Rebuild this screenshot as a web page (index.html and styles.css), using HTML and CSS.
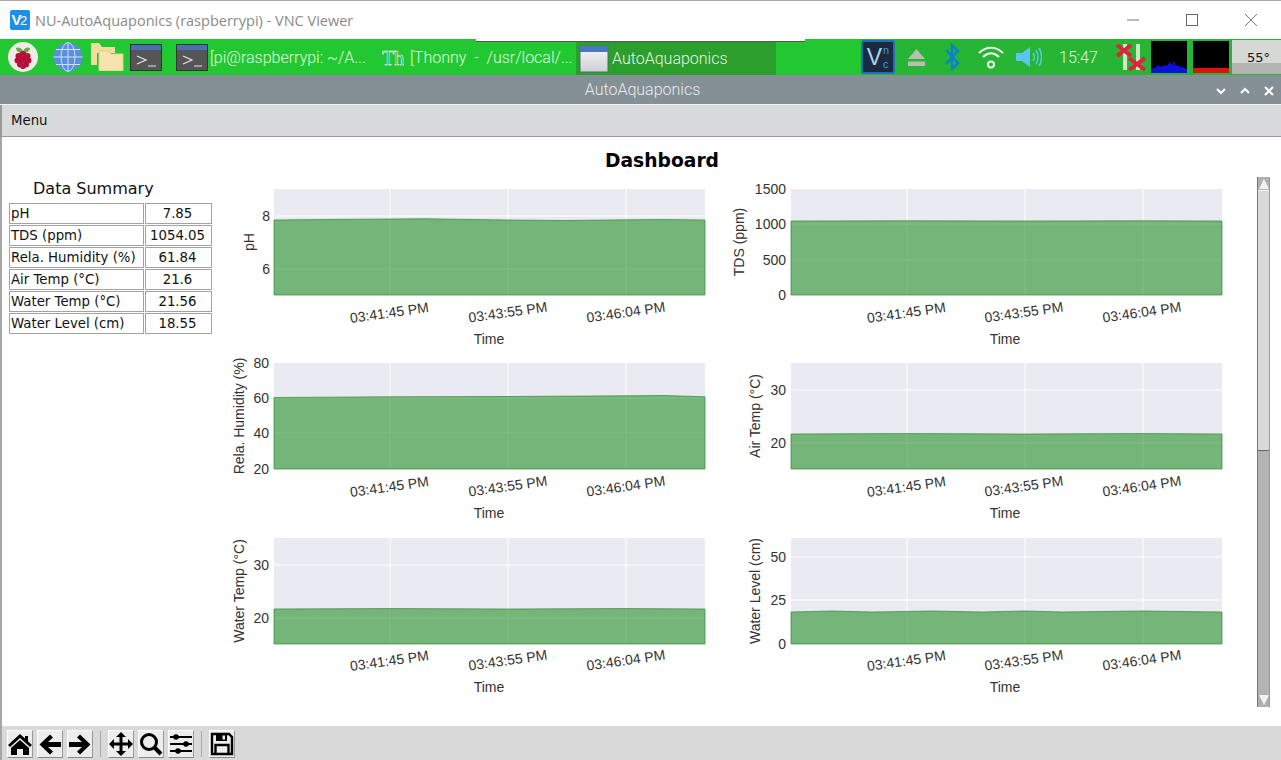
FILE: index.html
```html
<!DOCTYPE html>
<html lang="en">
<head>
<meta charset="utf-8">
<title>NU-AutoAquaponics (raspberrypi) - VNC Viewer</title>
<link rel="stylesheet" href="styles.css">
</head>
<body>
<div class="win">
  <header class="vnc-title">
    <svg class="vnc-logo" width="20" height="20" viewBox="0 0 20 20"><rect width="20" height="20" rx="2" fill="#1e8fe6"/><text x="1.5" y="15" class="logo-v">V</text><text x="10" y="15" class="logo-2">2</text></svg>
    <span class="vnc-title-text">NU-AutoAquaponics (raspberrypi) - VNC Viewer</span>
    <div class="win-ctrls">
      <svg width="14" height="14" viewBox="0 0 14 14"><path d="M1 7h12" stroke="#777" fill="none"/></svg>
      <svg width="14" height="14" viewBox="0 0 14 14"><rect x="1.5" y="1.5" width="11" height="11" stroke="#666" fill="none"/></svg>
      <svg width="14" height="14" viewBox="0 0 14 14"><path d="M1 1l12 12M13 1L1 13" stroke="#777" fill="none"/></svg>
    </div>
  </header>
  <div class="vnc-notch"></div>

  <nav class="taskbar">
    <svg class="tb-rpi" width="30" height="30" viewBox="0 0 30 30"><circle cx="15" cy="15" r="15" fill="#f1ebe6"/><path d="M15 9C12 4 9 6 8 6c0 3 3 5 7 5 4 0 7-2 7-5-1 0-4-2-7 3z" fill="#6aa84f"/><g fill="#b5123a"><circle cx="15" cy="12.500" r="3.600"/><circle cx="10.500" cy="14" r="3"/><circle cx="19.500" cy="14" r="3"/><circle cx="9.500" cy="18.500" r="3"/><circle cx="20.500" cy="18.500" r="3"/><circle cx="15" cy="18" r="3.600"/><circle cx="12" cy="22.500" r="3"/><circle cx="18" cy="22.500" r="3"/><circle cx="15" cy="24.500" r="2.600"/></g></svg>
    <svg class="tb-globe" width="30" height="30" viewBox="0 0 30 30"><circle cx="15" cy="15" r="14.500" fill="#5b8fdc"/><g stroke="#cfe2f8" fill="none"><ellipse cx="15" cy="15" rx="7" ry="14.500"/><path d="M15 .5v29M.5 15h29M3 7.500h24M3 22.500h24"/></g></svg>
    <svg class="tb-folder" width="33" height="28" viewBox="0 0 33 28"><path d="M0 0h8l3 4h13v6H0z" fill="#f2dc9b"/><path d="M0 2h6v20H0z" fill="#f2dc9b"/><path d="M8 8h9l3 3h12v17H8z" fill="#f6e3ad" stroke="#e3cb8a"/></svg>
    <svg class="term tb-term1" width="32" height="27" viewBox="0 0 32 27"><rect x=".5" y=".5" width="31" height="26" fill="#555" stroke="#333"/><rect x="1" y="1" width="30" height="5" fill="#4a6fb5"/><path d="M7 12l9 4-9 4M18 22h8" stroke="#e8e8e8" stroke-width="1.200" fill="none"/></svg>
    <div class="task task-term">
      <svg class="term" width="32" height="27" viewBox="0 0 32 27"><rect x=".5" y=".5" width="31" height="26" fill="#555" stroke="#333"/><rect x="1" y="1" width="30" height="5" fill="#4a6fb5"/><path d="M7 12l9 4-9 4M18 22h8" stroke="#e8e8e8" stroke-width="1.200" fill="none"/></svg>
      <span>[pi@raspberrypi: ~/A...</span>
    </div>
    <div class="task task-thonny">
      <svg width="22" height="24" viewBox="0 0 22 24"><text x="0" y="20" class="thonny-glyph">Th</text></svg>
      <span>[Thonny  -  /usr/local/...</span>
    </div>
    <div class="task task-active">
      <svg width="30" height="28" viewBox="0 0 30 28"><defs><linearGradient id="wg" x1="0" y1="0" x2="0" y2="1"><stop offset="0" stop-color="#f6f6fa"/><stop offset="1" stop-color="#cfcfd6"/></linearGradient></defs><rect x="1" y="1" width="28" height="26" fill="url(#wg)" stroke="#3f7a55"/><rect x="1" y="1" width="28" height="6" fill="#4a78c4"/></svg>
      <span>AutoAquaponics</span>
    </div>
    <div class="tray">
      <div class="tray-vnc"><span class="tv-v">V</span><span class="tv-stack"><span>n</span><span>c</span></span></div>
      <svg class="tr-eject" width="17" height="18" viewBox="0 0 17 18"><path d="M8.500 1L17 11H0z M0 13.500h17V18H0z" fill="#b9bdb4"/></svg>
      <svg class="tr-bt" width="16" height="28" viewBox="0 0 16 28"><path d="M2 7l12 13-6 6V2l6 6L2 21" stroke="#0c7ed6" stroke-width="2.400" fill="none"/></svg>
      <svg class="tr-wifi" width="26" height="24" viewBox="0 0 26 24"><g stroke="#eef5e8" stroke-width="2.200" fill="none"><path d="M1 8c7-7 17-7 24 0"/><path d="M5 12c5-5 11-5 16 0"/></g><circle cx="13" cy="19.500" r="3" fill="none" stroke="#eef5e8" stroke-width="2"/></svg>
      <svg class="tr-vol" width="26" height="22" viewBox="0 0 26 22"><path d="M0 7h6l8-6v20l-8-6H0z" fill="#5cc4ef"/><g stroke="#5cc4ef" stroke-width="1.500" fill="none"><path d="M17 7c1.500 2.500 1.500 5.500 0 8"/><path d="M20 4c2.500 4 2.500 10 0 14"/><path d="M23 2c3.500 5 3.500 13 0 18"/></g></svg>
      <span class="tr-clock">15:47</span>
      <svg class="tr-mixer" width="31" height="28" viewBox="0 0 31 28"><g fill="#cfe8c4"><rect x="8" y="1" width="4" height="26"/><rect x="21" y="1" width="4" height="26"/></g><path d="M2 2l14 11M16 2L2 13M14 15l16 12M30 15L14 27" stroke="#e4203f" stroke-width="3.800" fill="none"/></svg>
      <svg class="tr-cpu" width="36" height="32" viewBox="0 0 36 32"><rect width="36" height="32"/><path d="M0 32v-4l4-1 3-3 3 2 4-2 2 1 3-4 2 4 2-6 1 5 4 1 3 1 5 2v4z" fill="#0b12e0"/></svg>
      <svg class="tr-mem" width="36" height="32" viewBox="0 0 36 32"><rect width="36" height="32"/><rect y="27" width="36" height="5" fill="#e01010"/></svg>
      <div class="tr-temp"><span>55°</span></div>
    </div>
  </nav>

  <div class="app-title">
    <span>AutoAquaponics</span>
    <div class="app-ctrls">
      <svg width="10" height="8" viewBox="0 0 10 8"><path d="M1 2l4 4 4-4" stroke="#fff" stroke-width="2" fill="none"/></svg>
      <svg width="10" height="8" viewBox="0 0 10 8"><path d="M1 6l4-4 4 4" stroke="#fff" stroke-width="2" fill="none"/></svg>
      <svg width="10" height="10" viewBox="0 0 10 10"><path d="M1 1l8 8M9 1L1 9" stroke="#fff" stroke-width="2" fill="none"/></svg>
    </div>
  </div>

  <div class="menubar"><span>Menu</span></div>

  <main class="content">
    <div class="content-left">
      <h1 class="dash-title">Dashboard</h1>
      <div class="dash-body">
        <aside class="summary">
          <h2>Data Summary</h2>
          <table class="summary-table">
            <tr><td>pH</td><td>7.85</td></tr>
            <tr><td>TDS (ppm)</td><td>1054.05</td></tr>
            <tr><td>Rela. Humidity (%)</td><td>61.84</td></tr>
            <tr><td>Air Temp (°C)</td><td>21.6</td></tr>
            <tr><td>Water Temp (°C)</td><td>21.56</td></tr>
            <tr><td>Water Level (cm)</td><td>18.55</td></tr>
          </table>
        </aside>
        <section class="charts">
          <!-- pH -->
          <svg class="chart" width="517" height="174" viewBox="0 0 517 174">
            <rect x="49" y="9" width="431" height="106" class="bg"/>
            <path d="M165 9v106M283 9v106M401 9v106M49 36h431M49 89h431" class="grid"/>
            <path d="M49 40 L100 39.500 L165 39 L200 38.800 L283 40 L340 40.500 L401 39.800 L440 39.500 L480 40 V115 H49z" class="area"/>
            <text x="45" y="41" class="ytick">8</text><text x="45" y="94" class="ytick">6</text>
            <text transform="translate(165 137.500) rotate(-8)" class="xtick">03:41:45 PM</text>
            <text transform="translate(283.500 137) rotate(-8)" class="xtick">03:43:55 PM</text>
            <text transform="translate(401.500 137) rotate(-8)" class="xtick">03:46:04 PM</text>
            <text transform="translate(29 62) rotate(-90)" class="ylabel">pH</text>
            <text x="264" y="164" class="xlabel">Time</text>
          </svg>
          <!-- TDS -->
          <svg class="chart" width="517" height="174" viewBox="0 0 517 174">
            <rect x="49" y="9" width="431" height="106" class="bg"/>
            <path d="M165 9v106M283 9v106M401 9v106M49 44h431M49 80h431" class="grid"/>
            <path d="M49 41 L165 40.800 L283 41 L401 40.800 L480 41 V115 H49z" class="area"/>
            <text x="44" y="14" class="ytick">1500</text><text x="44" y="49" class="ytick">1000</text><text x="44" y="85" class="ytick">500</text><text x="44" y="120" class="ytick">0</text>
            <text transform="translate(2 62) rotate(-90)" class="ylabel">TDS (ppm)</text>
            <text transform="translate(165 137.500) rotate(-8)" class="xtick">03:41:45 PM</text>
            <text transform="translate(282.500 137) rotate(-8)" class="xtick">03:43:55 PM</text>
            <text transform="translate(400.500 137) rotate(-8)" class="xtick">03:46:04 PM</text>
            <text x="263" y="164" class="xlabel">Time</text>
          </svg>
          <!-- Humidity -->
          <svg class="chart" width="517" height="174" viewBox="0 0 517 174">
            <rect x="49" y="9" width="431" height="106" class="bg"/>
            <path d="M165 9v106M283 9v106M401 9v106M49 44h431M49 79h431" class="grid"/>
            <path d="M49 43.500 L165 42.800 L283 42.500 L401 41.800 L440 41.500 L480 42.800 V115 H49z" class="area"/>
            <text x="44" y="14" class="ytick">80</text><text x="44" y="49" class="ytick">60</text><text x="44" y="84" class="ytick">40</text><text x="44" y="120" class="ytick">20</text>
            <text transform="translate(19 62) rotate(-90)" class="ylabel">Rela. Humidity (%)</text>
            <text transform="translate(165 137.500) rotate(-8)" class="xtick">03:41:45 PM</text>
            <text transform="translate(283.500 137) rotate(-8)" class="xtick">03:43:55 PM</text>
            <text transform="translate(401.500 137) rotate(-8)" class="xtick">03:46:04 PM</text>
            <text x="264" y="164" class="xlabel">Time</text>
          </svg>
          <!-- Air temp -->
          <svg class="chart" width="517" height="174" viewBox="0 0 517 174">
            <rect x="49" y="9" width="431" height="106" class="bg"/>
            <path d="M165 9v106M283 9v106M401 9v106M49 36h431M49 89h431" class="grid"/>
            <path d="M49 80 L165 79.600 L283 80 L401 79.600 L480 80 V115 H49z" class="area"/>
            <text x="44" y="41" class="ytick">30</text><text x="44" y="94" class="ytick">20</text>
            <text transform="translate(18 62) rotate(-90)" class="ylabel">Air Temp (°C)</text>
            <text transform="translate(165 137.500) rotate(-8)" class="xtick">03:41:45 PM</text>
            <text transform="translate(282.500 137) rotate(-8)" class="xtick">03:43:55 PM</text>
            <text transform="translate(400.500 137) rotate(-8)" class="xtick">03:46:04 PM</text>
            <text x="263" y="164" class="xlabel">Time</text>
          </svg>
          <!-- Water temp -->
          <svg class="chart" width="517" height="174" viewBox="0 0 517 174">
            <rect x="49" y="10" width="431" height="106" class="bg"/>
            <path d="M165 10v106M283 10v106M401 10v106M49 37h431M49 90h431" class="grid"/>
            <path d="M49 81 L165 80.600 L283 81 L401 80.600 L480 81 V116 H49z" class="area"/>
            <text x="44" y="42" class="ytick">30</text><text x="44" y="95" class="ytick">20</text>
            <text transform="translate(19 63) rotate(-90)" class="ylabel">Water Temp (°C)</text>
            <text transform="translate(165 137.500) rotate(-8)" class="xtick">03:41:45 PM</text>
            <text transform="translate(283.500 137) rotate(-8)" class="xtick">03:43:55 PM</text>
            <text transform="translate(401.500 137) rotate(-8)" class="xtick">03:46:04 PM</text>
            <text x="264" y="164" class="xlabel">Time</text>
          </svg>
          <!-- Water level -->
          <svg class="chart" width="517" height="174" viewBox="0 0 517 174">
            <rect x="49" y="10" width="431" height="106" class="bg"/>
            <path d="M165 10v106M283 10v106M401 10v106M49 29h431M49 72h431" class="grid"/>
            <path d="M49 84 L90 83 L130 84 L190 83 L240 84 L283 83 L320 84 L401 83 L440 83.500 L480 84 V116 H49z" class="area"/>
            <text x="44" y="34" class="ytick">50</text><text x="44" y="77" class="ytick">25</text><text x="44" y="121" class="ytick">0</text>
            <text transform="translate(18 63) rotate(-90)" class="ylabel">Water Level (cm)</text>
            <text transform="translate(165 137.500) rotate(-8)" class="xtick">03:41:45 PM</text>
            <text transform="translate(282.500 137) rotate(-8)" class="xtick">03:43:55 PM</text>
            <text transform="translate(400.500 137) rotate(-8)" class="xtick">03:46:04 PM</text>
            <text x="263" y="164" class="xlabel">Time</text>
          </svg>
        </section>
      </div>
    </div>
    <div class="scrollbar">
      <div class="sb-btn"><svg width="10" height="11" viewBox="0 0 10 11"><path d="M5 1l5 10H0z" fill="#f2f2f2"/></svg></div>
      <div class="sb-thumb"></div>
      <div class="sb-trough"></div>
      <div class="sb-btn"><svg width="10" height="11" viewBox="0 0 10 11"><path d="M5 10L10 0H0z" fill="#f2f2f2"/></svg></div>
    </div>
  </main>

  <footer class="toolbar">
    <button class="tool" aria-label="Home"><svg width="24" height="24" viewBox="0 0 24 24"><path d="M12 2L0 13l2 2L12 6l10 9 2-2-4-3.700V4h-3v2.600z"/><path d="M12 8L3 16v7h6v-6h6v6h6v-7z"/></svg></button>
    <button class="tool" aria-label="Back"><svg width="24" height="24" viewBox="0 0 24 24"><path d="M12 2.500l3 3L10 10h13v5H10l5 4.500-3 3L1.500 12.500z"/></svg></button>
    <button class="tool" aria-label="Forward"><svg width="24" height="24" viewBox="0 0 24 24"><path d="M12 2.500l-3 3 5 4.500H1v5h13l-5 4.500 3 3 10.500-10z"/></svg></button>
    <span class="tool-sep"></span>
    <button class="tool" aria-label="Pan"><svg width="24" height="24" viewBox="0 0 24 24"><path d="M12 0l5 5h-3.500v5.500H19V7l5 5-5 5v-3.500h-5.500V19H17l-5 5-5-5h3.500v-5.500H5V17l-5-5 5-5v3.500h5.500V5H7z"/></svg></button>
    <button class="tool" aria-label="Zoom"><svg width="24" height="24" viewBox="0 0 24 24"><circle cx="10" cy="10" r="7.500" fill="none" stroke="#000" stroke-width="3"/><path d="M15 15l7 7" stroke="#000" stroke-width="4"/></svg></button>
    <button class="tool" aria-label="Configure"><svg width="24" height="24" viewBox="0 0 24 24"><path d="M1 5h22M1 12h22M1 19h22" stroke="#000" stroke-width="2"/><circle cx="7" cy="5" r="2.800"/><circle cx="17" cy="12" r="2.800"/><circle cx="9" cy="19" r="2.800"/></svg></button>
    <span class="tool-sep"></span>
    <button class="tool" aria-label="Save"><svg width="24" height="24" viewBox="0 0 24 24"><path d="M2 2h17l3 3v17H2z" fill="none" stroke="#000" stroke-width="2.400"/><path d="M6 2h11v7H6z"/><rect x="12.500" y="3.500" width="2.500" height="4" fill="#eee"/><path d="M5.500 21v-8h13v8" fill="none" stroke="#000" stroke-width="2.400"/></svg></button>
  </footer>
</div>
</body>
</html>
```
FILE: styles.css
```css
* { box-sizing: border-box; }
html, body { margin: 0; padding: 0; }
body { width: 1281px; height: 760px; overflow: hidden; background: #fff; }
.win { position: relative; display: flex; flex-direction: column; width: 1281px; height: 760px; }

.vnc-title { display: flex; align-items: center; height: 39px; padding: 0 23px 0 10px; background: #fff; border-top: 1px solid #aaa; flex: none; }
.vnc-logo { flex: none; }
.logo-v { font: 700 15px "Liberation Sans", sans-serif; fill: #fff; }
.logo-2 { font: 400 13px "Liberation Sans", sans-serif; fill: #fff; }
.vnc-title-text { margin-left: 5px; font: 14.500px "Open Sans", sans-serif; color: #8a8a8a; }
.win-ctrls { display: flex; gap: 45px; margin-left: auto; }
.vnc-notch { position: absolute; left: 476px; top: 39px; width: 329px; height: 3px; background: #fff; border-bottom: 1px solid #555; z-index: 2; }

.taskbar { display: flex; align-items: center; height: 36px; flex: none; background: #22c832; color: #e4f7df; font: 300 16px Roboto, sans-serif; white-space: pre; }
.tb-rpi { margin-left: 8px; }
.tb-globe { margin-left: 15px; }
.tb-folder { margin-left: 8px; }
.tb-term1 { margin-left: 6px; }
.task { display: flex; align-items: center; height: 36px; }
.task-term { margin-left: 14px; width: 206px; gap: 2px; }
.task-thonny { width: 194px; gap: 6px; }
.task-active { width: 200px; background: #2b9e2e; padding-left: 3px; gap: 3px; margin-top: 3px; height: 33px; }
.thonny-glyph { font: 400 20px "Liberation Serif", serif; fill: #1f9c2a; stroke: #f2f2f2; stroke-width: .6px; }

.tray { display: flex; align-items: center; margin-left: 85px; flex: 1; height: 36px; background: #26b534; }
.tray-vnc { display: flex; align-items: center; justify-content: center; gap: 1px; width: 34px; height: 34px; background: #1c2a3e; border: 2px solid #1e6fc0; border-radius: 3px; font: 300 23px "Liberation Sans", sans-serif; }
.tv-v { color: #a8d4f5; }
.tv-stack { display: flex; flex-direction: column; color: #3b9be0; font-size: 11px; line-height: 14px; }
.tr-eject { margin-left: 13px; }
.tr-bt { margin-left: 19px; }
.tr-wifi { margin-left: 18px; }
.tr-vol { margin-left: 12px; }
.tr-clock { margin-left: 17px; width: 39px; }
.tr-mixer { margin-left: 17px; }
.tr-cpu { margin-left: 5px; }
.tr-mem { margin-left: 6px; }
.tr-temp { display: flex; align-items: center; justify-content: flex-end; margin-left: 3px; width: 49px; height: 34px; padding: 0 11px 0 0; background: linear-gradient(#d6d8d4 68%, #b4b4b2 68%); font: 13px "DejaVu Sans", sans-serif; color: #111; }

.app-title { position: relative; display: flex; align-items: center; justify-content: center; height: 30px; flex: none; padding-left: 4px; background: #858f96; color: #e8ecee; font: 300 16px Roboto, sans-serif; border-bottom: 1px solid #f2f2f2; }
.app-ctrls { position: absolute; right: 7px; top: 11px; display: flex; align-items: center; gap: 14px; }

.menubar { display: flex; align-items: center; height: 32px; flex: none; background: #d9dadc; border-left: 2px solid #999; padding-left: 9px; border-bottom: 1px solid #999; font: 13.300px "DejaVu Sans", sans-serif; color: #111; }

.content { display: flex; flex: 1; min-height: 0; background: #fff; border-left: 2px solid #a5a5a5; }
.content-left { width: 1255px; flex: none; }
.dash-title { margin: 0; height: 43px; padding: 12px 0 0 603px; font: 700 18.700px "DejaVu Sans", sans-serif; color: #000; line-height: 23px; }
.dash-body { display: flex; }
.summary { width: 223px; flex: none; }
.summary h2 { margin: 0 0 3px 31px; height: 19px; font: 400 16px "DejaVu Sans", sans-serif; line-height: 17px; color: #111; }
.summary-table { margin-left: 6px; border-collapse: separate; border-spacing: 1px; font: 13.300px "DejaVu Sans", sans-serif; color: #111; }
.summary-table td { height: 21px; padding: 0 1px; border: 1px solid #a3a3a3; line-height: 17px; white-space: nowrap; }
.summary-table td:first-child { width: 135px; }
.summary-table td:last-child { width: 67px; padding-right: 3px; text-align: center; }

.charts { display: grid; grid-template-columns: 517px 515px; grid-auto-rows: 174px; }
.chart { display: block; overflow: visible; }
.chart .bg { fill: #eaeaf2; }
.chart .grid { stroke: #fff; stroke-width: 1; fill: none; }
.chart .area { fill: #008000; fill-opacity: .5; stroke: #2f8a3a; stroke-opacity: .7; stroke-width: 1; }
.chart text { font-family: "Liberation Sans", sans-serif; font-size: 14px; fill: #333; }
.chart .ytick { text-anchor: end; }
.chart .ylabel { text-anchor: middle; }
.chart .xtick { text-anchor: middle; }
.chart .xlabel { text-anchor: middle; }

.scrollbar { display: flex; flex-direction: column; width: 13px; height: 530px; margin-top: 40px; border-left: 1px solid #777; border-right: 1px solid #999; flex: none; }
.sb-btn { display: flex; align-items: center; justify-content: center; height: 13px; flex: none; background: #b0b0b0; }
.sb-thumb { height: 261px; flex: none; background: #d9d9dc; border-top: 1px solid #f5f5f5; border-bottom: 1px solid #666; }
.sb-trough { flex: 1; background: #b3b3b3; }

.toolbar { display: flex; align-items: center; gap: 4px; height: 34px; flex: none; padding: 2px 0 0 5px; background: #d9d9d9; border-left: 2px solid #a5a5a5; }
.tool { display: flex; align-items: center; justify-content: center; width: 26px; height: 28px; padding: 0; background: #ededed; border: 1px solid; border-color: #fff #999 #888 #fff; }
.tool-sep { width: 1px; height: 26px; margin: 0 3px; background: #aaa; }
```
